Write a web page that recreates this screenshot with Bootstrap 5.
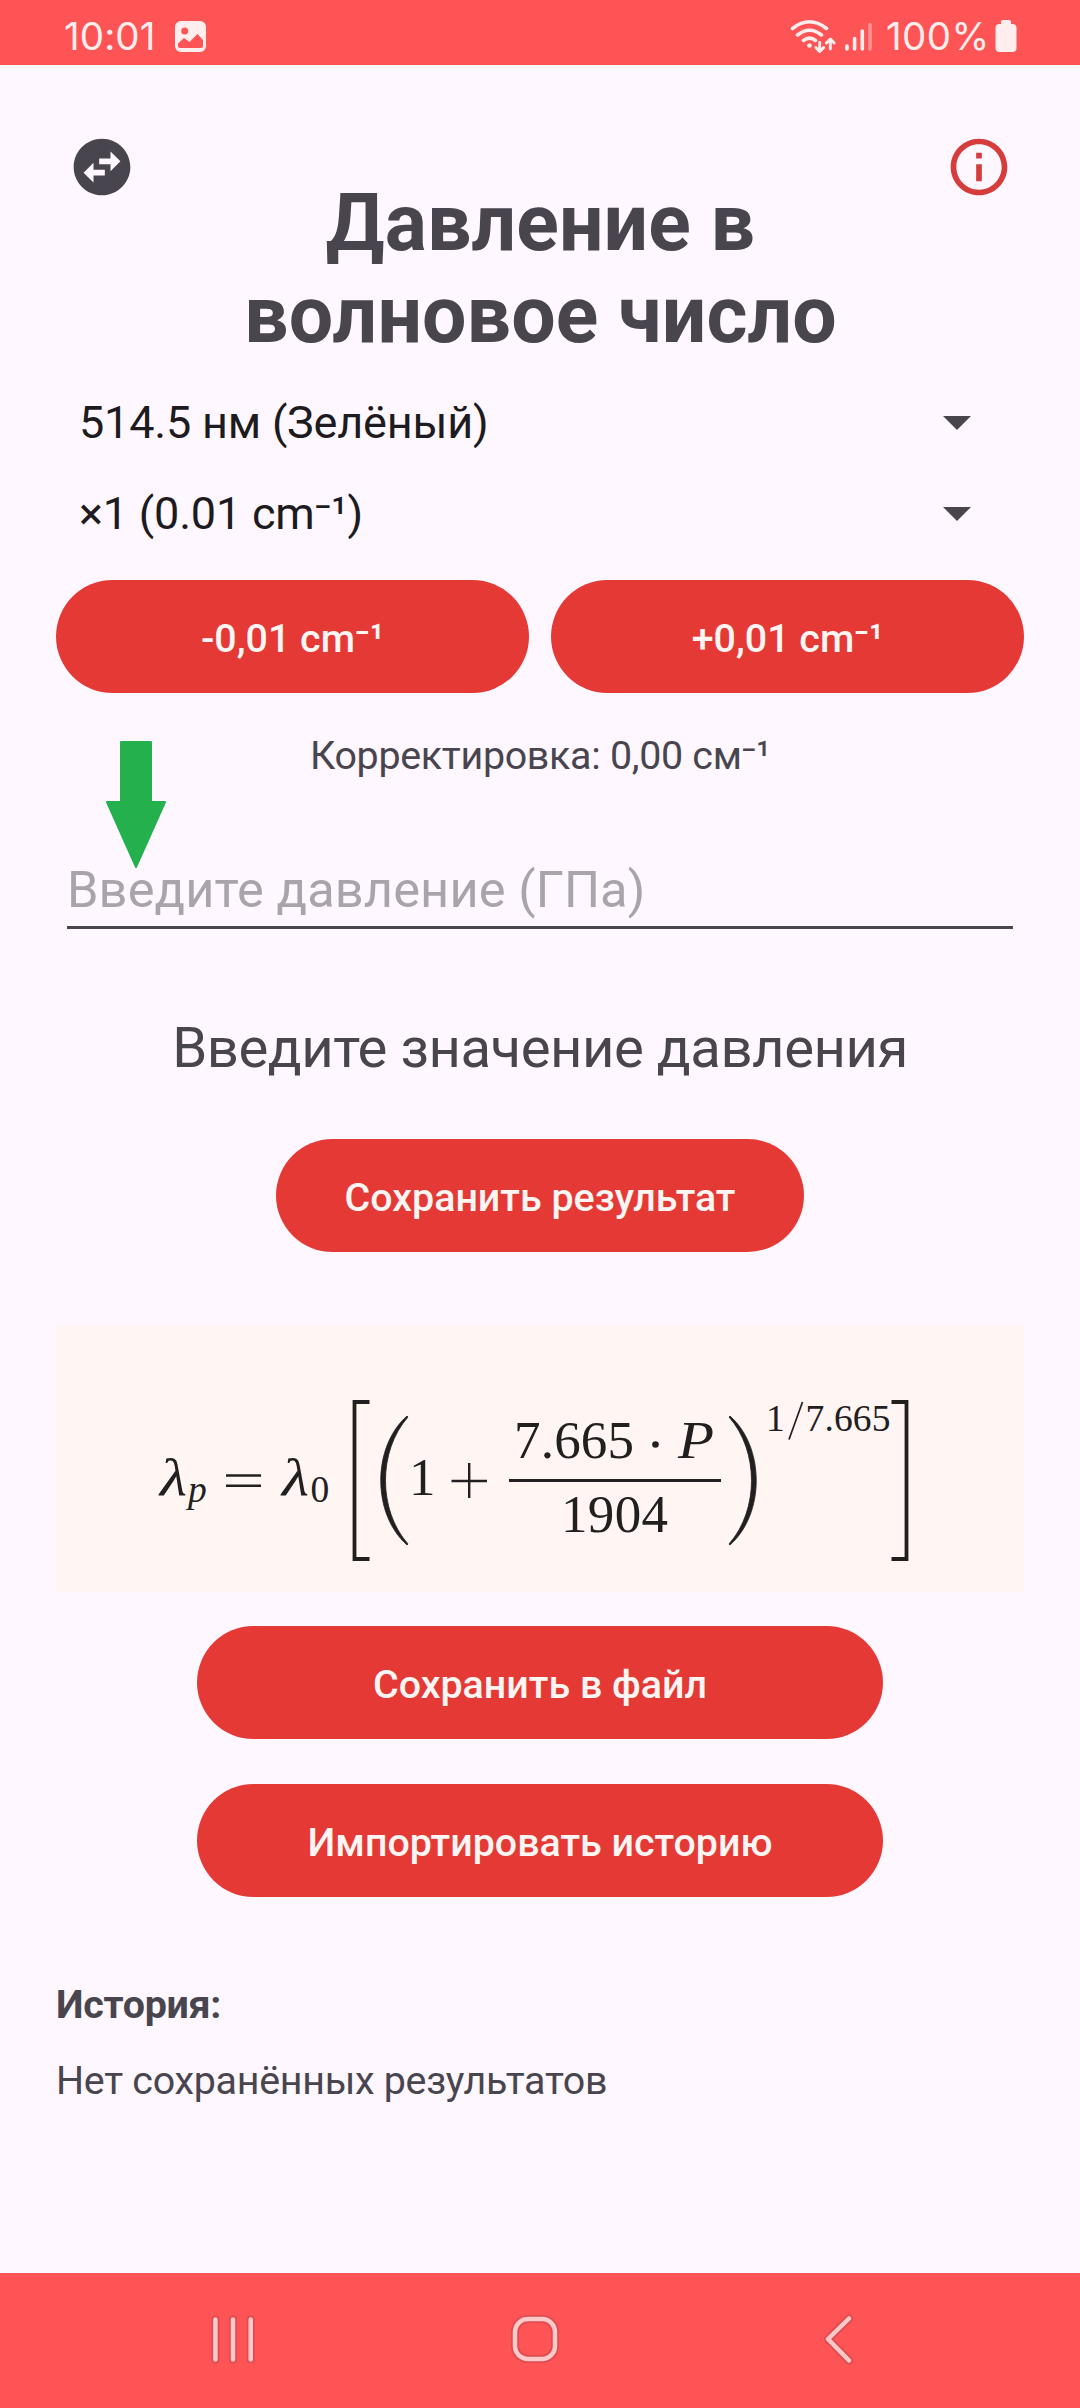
<!DOCTYPE html>
<html lang="ru">
<head>
<meta charset="utf-8">
<meta name="viewport" content="width=device-width, initial-scale=1">
<title>Давление в волновое число</title>
<link rel="stylesheet" href="https://cdn.jsdelivr.net/npm/bootstrap@5.3.0/dist/css/bootstrap.min.css">
<style>
body{background:#fef7ff;color:#49454e;font-family:Roboto,"Noto Sans",sans-serif;font-size:39.4px;line-height:46px;min-height:2408px}
svg{display:block;flex:none}
.status-strip{height:65px;background:#ff5455;color:#ffeeed;padding:0 63px 0 64px;font-family:Inter,sans-serif;font-size:38.5px;line-height:72px}
.clock{width:111px;letter-spacing:.1px}
.level{width:101px;letter-spacing:.4px;white-space:nowrap}
.app-head{padding:68px 67px 0 68px}
.app-title{font-size:78.75px;line-height:92px;font-weight:700;margin:44px 0 0;letter-spacing:.1px}
.app-main{padding:0 56px}
.picker{height:91px;padding:0 53px 0 23px;font-size:45px;line-height:91px;color:#1d1b20;letter-spacing:-.2px}
.btn-pill{--bs-btn-bg:#e53935;--bs-btn-color:#fff5f3;--bs-btn-border-width:0;--bs-btn-font-size:39.4px;--bs-btn-font-weight:500;--bs-btn-line-height:46px;--bs-btn-padding-y:0;--bs-btn-hover-bg:#d32f2f;--bs-btn-hover-color:#fff;height:113px;padding-top:4px;border-radius:57px}
.pair{margin-top:21px;gap:22px}
.offset-note{margin-top:40px;letter-spacing:-.3px}
.pressure{margin:80px 11px 0;position:relative}
.pressure input{border:0;border-bottom:3px solid #49454e;border-radius:0;background:transparent;height:70px;padding:0 0 7px;font-size:50.6px;line-height:60px;color:#49454e;letter-spacing:.1px}
.pressure input::placeholder{color:#a9a4ab;opacity:1}
.pointer-arrow{position:absolute;left:39px;top:-118px}
.answer{margin-top:86px;font-size:56.25px;line-height:66px;letter-spacing:-.48px}
.save-one{margin-top:58px;width:528px}
.formula{margin-top:73px;height:267px;background:#fff5f3}
.formula text{font-family:"Liberation Serif",serif;font-size:53px;fill:#22201f}
.formula .it{font-style:italic}
.formula .sm{font-size:37.5px}
.wide{width:686px}
.to-file{margin-top:34px}
.import{margin-top:45px}
.history-title{margin-top:85px;letter-spacing:-.28px}
.history-empty{margin-top:30px;letter-spacing:-.28px}
.nav-strip{height:135px;background:#ff5455;padding-top:40px}
</style>
</head>
<body class="d-flex flex-column">
<header class="status-strip d-flex align-items-start">
  <span class="clock">10:01</span>
  <svg class="me-auto" width="31" height="65" viewBox="0 0 31 65"><rect y="21" width="31" height="31" rx="6" fill="#ffeeed"/><circle cx="9.7" cy="31" r="3.5" fill="#ff5455"/><path d="M3 43.500L9 38l5.500 4L22.500 34l5.500 6v6q0 2-2 2H5q-2 0-2-2z" fill="#ff5455"/></svg>
  <svg width="92" height="65" viewBox="790 0 92 65" fill="none" stroke="#ffeeed" stroke-linecap="round" stroke-linejoin="round">
    <g stroke-width="3.600"><path d="M792.500 28.500q17-13.500 34 0M797.500 35q12-9.500 24 0M803.500 40.500q6-4.600 12 0"/></g>
    <circle cx="809.500" cy="45.500" r="2.300" fill="#ffeeed" stroke="none"/>
    <path stroke-width="2.900" d="M819.700 42.500v8.500M815.800 47.600l3.900 3.900 3.900-3.900M830.300 49v-9M826.400 43l3.900-3.900 3.900 3.900"/>
    <g stroke-width="3.600"><path d="M847 46v3M854.600 38.500v10.500M862.300 31v18"/><path d="M870 24.500v24.500" opacity=".4"/></g>
  </svg>
  <span class="level ms-1">100%</span>
  <svg class="ms-2" width="22" height="65" viewBox="0 0 22 65" fill="#ffeeed"><rect x="6" y="20" width="10" height="8" rx="2"/><rect x=".5" y="24" width="21" height="28" rx="4"/></svg>
</header>

<div class="app-head d-flex justify-content-between align-items-start">
  <svg width="68" height="68" viewBox="0 0 24 24" fill="#49454e"><path d="M22 12c0-5.520-4.480-10-10-10S2 6.480 2 12s4.480 10 10 10 10-4.480 10-10zm-7-5.500l3.500 3.500-3.500 3.500V11h-4V9h4V6.500zm-6 11L5.500 14 9 10.500V13h4v2H9v2.500z"/></svg>
  <h1 class="app-title text-center">Давление в<br>волновое число</h1>
  <svg width="68" height="68" viewBox="0 0 24 24" fill="#d53c3b"><path d="M11 7h2v2h-2zm0 4h2v6h-2zm1-9C6.480 2 2 6.480 2 12s4.480 10 10 10 10-4.480 10-10S17.520 2 12 2zm0 18c-4.410 0-8-3.590-8-8s3.590-8 8-8 8 3.590 8 8-3.590 8-8 8z"/></svg>
</div>

<main class="app-main d-flex flex-column flex-grow-1">
  <div class="picker d-flex align-items-center justify-content-between mt-3"><span>514.5 нм (Зелёный)</span><svg width="28" height="14" viewBox="0 0 28 14"><path d="M0 0h28L14 14z" fill="#49454e"/></svg></div>
  <div class="picker d-flex align-items-center justify-content-between"><span>×1 (0.01 cm⁻¹)</span><svg width="28" height="14" viewBox="0 0 28 14"><path d="M0 0h28L14 14z" fill="#49454e"/></svg></div>

  <div class="pair d-flex">
    <button class="btn btn-pill flex-fill w-50" type="button">-0,01 cm⁻¹</button>
    <button class="btn btn-pill flex-fill w-50" type="button">+0,01 cm⁻¹</button>
  </div>

  <div class="offset-note text-center">Корректировка: 0,00 см⁻¹</div>

  <div class="pressure">
    <input class="w-100 d-block" type="text" placeholder="Введите давление (ГПа)" aria-label="Давление">
    <svg class="pointer-arrow" width="60" height="128" viewBox="0 0 60 128"><path d="M15 1h30v60h14L30 126 1 61h14z" fill="#24b14d" stroke="#24b14d" stroke-width="2" stroke-linejoin="round"/></svg>
  </div>

  <div class="answer text-center">Введите значение давления</div>
  <button class="btn btn-pill save-one align-self-center" type="button">Сохранить результат</button>

  <div class="formula">
    <svg width="968" height="267" viewBox="56 1325 968 267">
      <text class="it" x="160" y="1494.500" textLength="27" lengthAdjust="spacingAndGlyphs">λ</text>
      <text class="it sm" x="188" y="1502">p</text>
      <path d="M226 1475.500h35M226 1485.700h35" stroke="#22201f" stroke-width="2.400"/>
      <text class="it" x="282" y="1494.500" textLength="27" lengthAdjust="spacingAndGlyphs">λ</text>
      <text class="sm" x="310.500" y="1502">0</text>
      <path d="M370 1402H355V1559H370M892 1402H907V1559H892" transform="translate(-.5 0)" fill="none" stroke="#22201f" stroke-width="3.800"/>
      <path d="M407 1416C372 1447 372 1514 407 1545L408 1544C378 1510 378 1451 408 1417zM730 1416C765 1447 765 1514 730 1545L729 1544C759 1510 759 1451 729 1417z" fill="#22201f" stroke="#22201f" stroke-width=".8"/>
      <text x="409" y="1494.500">1</text>
      <path d="M451.500 1481H487M469.200 1463v35" stroke="#22201f" stroke-width="2.400"/>
      <text x="514" y="1458" textLength="120">7.665</text>
      <circle cx="655.500" cy="1444.500" r="3.300" fill="#22201f"/>
      <text class="it" x="678" y="1458" textLength="36" lengthAdjust="spacingAndGlyphs">P</text>
      <path d="M509 1480.500H721" stroke="#22201f" stroke-width="3"/>
      <text x="561" y="1531.500" textLength="107">1904</text>
      <text class="sm" x="766" y="1430.700">1</text>
      <path d="M789 1439.500L802.500 1402" stroke="#22201f" stroke-width="1.700"/>
      <text class="sm" x="805.500" y="1430.700" textLength="85">7.665</text>
    </svg>
  </div>

  <button class="btn btn-pill wide to-file align-self-center" type="button">Сохранить в файл</button>
  <button class="btn btn-pill wide import align-self-center" type="button">Импортировать историю</button>

  <div class="history-title fw-bold">История:</div>
  <div class="history-empty">Нет сохранённых результатов</div>
</main>

<footer class="nav-strip">
  <svg width="1080" height="52" viewBox="0 2313 1080 52" fill="none" stroke-linecap="round" stroke-linejoin="round">
    <g stroke="#de4c4f" stroke-width="8"><path d="M215.400 2319.500v40M233 2319.500v40M250.700 2319.500v40M849 2318.500L828 2339l21 21.500"/><rect x="515" y="2319" width="40" height="40" rx="13"/></g>
    <g stroke="#ffc8c9" stroke-width="4.500"><path d="M215.400 2319.500v40M233 2319.500v40M250.700 2319.500v40M849 2318.500L828 2339l21 21.500"/><rect x="515" y="2319" width="40" height="40" rx="13"/></g>
  </svg>
</footer>
<script src="https://cdn.jsdelivr.net/npm/bootstrap@5.3.0/dist/js/bootstrap.bundle.min.js"></script>
</body>
</html>
